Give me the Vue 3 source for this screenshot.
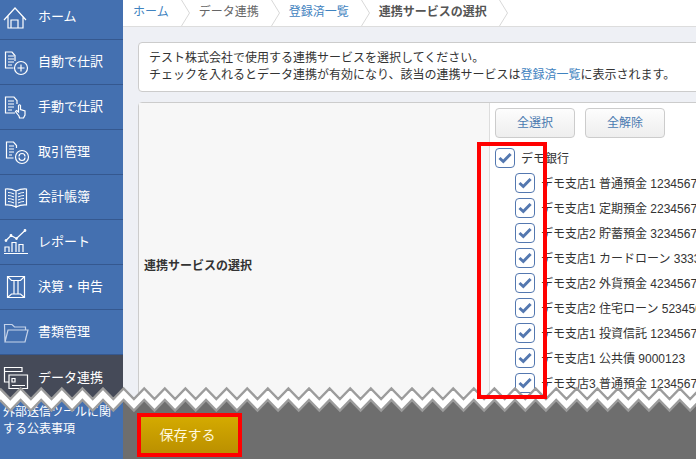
<script setup>
const circle = (x, y, r) => `M${x - r} ${y}a${r} ${r} 0 1 0 ${2 * r} 0a${r} ${r} 0 1 0 ${-2 * r} 0`
const docLines = 'M5 10H11M5 13H11M5 16H11M5 19H9'

const navItems = [
  { label: 'ホーム', d: 'M1 19L12 7L23 19M5 15V27H20V15M8 27V19H15V27' },
  { label: '自動で仕訳', d: `M12 15V9.5L9 6H2.5V22H10.5${docLines}${circle(18, 22, 6.5)}M18 18.5V25.5M14.5 22H21.5` },
  { label: '手動で仕訳', d: `M14 13V9.5L11 6H2.5V22H12${docLines}M16 25L12.5 20.5L13.5 19.5L15.5 21V14.5Q16.5 13 17.5 14.5V18.5L22 20V24L20.5 27H16.5L16 25` },
  { label: '取引管理', d: `M13.5 12V9.5L10.5 6H3.5V22H10.5M6 10H11M6 13H11M6 16H11M6 19H9${circle(19, 21, 6.5)}M16 20.5A3 3 0 0 1 22 20.5M22 21.5A3 3 0 0 1 16 21.5` },
  { label: '会計帳簿', d: 'M13 10V27M13 10Q8 7.5 2.5 8V24Q8 23.5 13 26Q18 23.5 23.5 24V8Q18 7.5 13 10M5 11.5Q8 11.5 11 13M5 14.5Q8 14.5 11 16M5 17.5Q8 17.5 11 19M5 20.5Q8 20.5 11 22M15 13Q18 11.5 21 11.5M15 16Q18 14.5 21 14.5M15 19Q18 17.5 21 17.5M15 22Q18 20.5 21 20.5' },
  { label: 'レポート', d: `M1 27.5H25M2 26V21H6V26M9 26V16.5H13V26M16 26V18.5H20V26M3 14.5L8 9.5L13.5 12.5L22 4.5${circle(3, 14.5, 0.8)}${circle(8, 9.5, 0.8)}${circle(13.5, 12.5, 0.8)}${circle(22, 4.5, 0.8)}` },
  { label: '決算・申告', d: 'M4.5 5.5H21.5V26.5H4.5ZM4.5 5.5L8.5 9.5H17.5L21.5 5.5M4.5 26.5L8.5 23H17.5L21.5 26.5M11 9.5V23M15 9.5V23' },
  { label: '書類管理', d: 'M2 26L1.5 8.5H9L11.5 11H22.5V14M2 26L5 14H25L22 26Z', dim: true },
  { label: 'データ連携', d: 'M19 10V5.5H1.5V20H6M1.5 9.5H19M6 26.5V13H24.5V26.5ZM9 16.5V20H12V16.5ZM9 23.5H22', active: true }
]

const accounts = [
  'デモ支店1 普通預金 1234567',
  'デモ支店1 定期預金 2234567',
  'デモ支店2 貯蓄預金 3234567',
  'デモ支店1 カードローン 3333333',
  'デモ支店2 外貨預金 4234567',
  'デモ支店2 住宅ローン 5234567',
  'デモ支店1 投資信託 1234567',
  'デモ支店1 公共債 9000123',
  'デモ支店3 普通預金 1234567'
]

const crumbs = [
  { label: 'ホーム', kind: 'link' },
  { label: 'データ連携', kind: 'plain' },
  { label: '登録済一覧', kind: 'link' },
  { label: '連携サービスの選択', kind: 'current' }
]

const period = 20.6
const edge = (base, reverse) => {
  const pts = []
  for (let i = 0; i < 70; i++) {
    pts.push([+(i * period / 2).toFixed(1), base + (i % 2 ? 10.5 : 0)])
  }
  return (reverse ? pts.reverse() : pts).map(p => p.join(',')).join(' ')
}
const topEdge = edge(3.5, false)
const bottomEdge = edge(15, false)
const band = edge(3.5, false) + ' ' + edge(15, true)
</script>

<template>
  <div class="page">
    <aside class="side">
      <a v-for="n in navItems" :key="n.label" class="nav" :class="{ active: n.active }">
        <svg class="nav-icon" :class="{ dim: n.dim }" width="32" height="32" viewBox="0 0 32 32">
          <path :d="n.d" />
        </svg>
        <span class="nav-label">{{ n.label }}</span>
      </a>
    </aside>

    <main class="main">
      <nav class="crumbs">
        <span v-for="c in crumbs" :key="c.label" class="crumb" :class="c.kind">
          <span class="crumb-label">{{ c.label }}</span>
          <svg width="9" height="26" viewBox="0 0 9 26"><path d="M0.5 0L8.5 13L0.5 26" /></svg>
        </span>
      </nav>

      <div class="content">
        <div class="notice">
          テスト株式会社で使用する連携サービスを選択してください。<br />
          チェックを入れるとデータ連携が有効になり、該当の連携サービスは<a class="inline-link">登録済一覧</a>に表示されます。
        </div>

        <section class="table">
          <div class="head-cell">連携サービスの選択</div>
          <div class="body-cell">
            <div class="buttons">
              <button class="btn">全選択</button>
              <button class="btn">全解除</button>
            </div>
            <ul class="list">
              <li class="row parent">
                <span class="box"><svg width="18" height="18" viewBox="0 0 18 18"><path d="M3.5 9L7.3 12.5L14.6 5" /></svg></span>
                <span>デモ銀行</span>
              </li>
              <li v-for="a in accounts" :key="a" class="row child">
                <span class="box"><svg width="18" height="18" viewBox="0 0 18 18"><path d="M3.5 9L7.3 12.5L14.6 5" /></svg></span>
                <span>{{ a }}</span>
              </li>
            </ul>
          </div>
        </section>
      </div>
    </main>

    <footer class="footer">
      <a class="ext-link">外部送信ツールに関する公表事項</a>
      <div class="actions">
        <button class="save">保存する</button>
      </div>
    </footer>

    <svg class="tear" width="696" height="30" viewBox="0 0 696 30">
      <polygon :points="band" fill="#fff" />
      <polyline :points="topEdge" fill="none" stroke="#9c9c9c" stroke-width="2.4" />
      <polyline :points="bottomEdge" fill="none" stroke="#9c9c9c" stroke-width="2.4" />
    </svg>

    <div class="mark"></div>
  </div>
</template>

<style>
html, body { margin: 0; background: #fff; }
</style>

<style scoped>
.page {
  position: relative;
  display: flex;
  width: 696px;
  height: 459px;
  overflow: hidden;
  font-family: "Liberation Sans", "Noto Sans CJK JP", sans-serif;
  font-size: 12px;
  color: #333;
  background: #eef0f5;
}
.side {
  flex: 0 0 123px;
  margin-top: -5px;
  background: #4470b0;
}
.nav {
  display: flex;
  align-items: center;
  gap: 3px;
  box-sizing: border-box;
  height: 45px;
  padding-left: 3px;
  border-bottom: 1px solid #35588f;
  font-size: 13px;
  color: #fff;
}
.nav-label { margin-bottom: 3px; }
.nav.active {
  background: #454a58;
  border-bottom: 0;
}
.nav-icon { flex: none; }
.nav-icon path {
  fill: none;
  stroke: #fff;
  stroke-width: 1.2;
}
.nav-icon.dim path { stroke: #c5d3ea; }
.main {
  flex: 1;
  min-width: 0;
}
.crumbs {
  display: flex;
  height: 26px;
  padding-left: 10px;
  background: #fff;
  border-bottom: 1px solid #ddd;
}
.crumb {
  display: flex;
  align-items: center;
  gap: 12px;
  margin-right: 9px;
  white-space: nowrap;
}
.crumb-label { margin-bottom: 5px; }
.crumb svg path {
  fill: none;
  stroke: #d8d8d8;
}
.crumb.link { color: #3f83c0; }
.crumb.plain { color: #666; }
.crumb.current { color: #555; font-weight: 700; }
.content {
  padding: 15px 0 0 15px;
  width: 640px;
}
.notice {
  box-sizing: border-box;
  width: 620px;
  height: 50px;
  padding: 7px 10px;
  line-height: 17px;
  white-space: nowrap;
  background: #fff;
  border: 1px solid #ccc;
  border-radius: 4px;
}
.inline-link { color: #3f83c0; }
.table {
  display: flex;
  box-sizing: border-box;
  width: 640px;
  height: 326px;
  margin-top: 10px;
  background: #fff;
  border: 1px solid #ccc;
  border-radius: 4px;
}
.head-cell {
  flex: 0 0 345px;
  display: flex;
  align-items: center;
  padding: 0 0 2px 5px;
  font-weight: 700;
  background: #f7f7f7;
  border-right: 1px solid #ddd;
}
.body-cell {
  flex: 1;
  padding: 5px 0 0 5px;
  min-width: 0;
}
.buttons {
  display: flex;
  gap: 10px;
}
.btn {
  width: 80px;
  height: 30px;
  padding: 0 0 3px;
  font: inherit;
  color: #4a7ab0;
  background: linear-gradient(#fdfdfd, #eeeeee);
  border: 1px solid #ccc;
  border-radius: 4px;
}
.list {
  margin: 7px 0 0;
  padding: 0;
  list-style: none;
}
.row {
  display: flex;
  align-items: center;
  gap: 6px;
  height: 25px;
  white-space: nowrap;
}
.child { padding-left: 20px; }
.box {
  display: flex;
  align-items: center;
  justify-content: center;
  flex: none;
  box-sizing: border-box;
  width: 20px;
  height: 20px;
  background: #fff;
  border: 1.5px solid #5478b0;
  border-radius: 4px;
}
.box svg path {
  fill: none;
  stroke: #5478b0;
  stroke-width: 3;
}
.footer {
  position: absolute;
  left: 0;
  right: 0;
  top: 397px;
  bottom: 0;
  display: flex;
}
.ext-link {
  box-sizing: border-box;
  flex: 0 0 123px;
  padding: 7px 12px 0 3px;
  font-size: 12px;
  line-height: 17px;
  color: #fff;
  background: #4470b0;
}
.actions {
  flex: 1;
  padding: 16px 0 0 14px;
  background: #6e6e6e;
}
.save {
  box-sizing: border-box;
  width: 105px;
  height: 44px;
  padding: 0 4px 3px 0;
  font: inherit;
  font-size: 14px;
  color: #fff8dc;
  background: linear-gradient(#d4aa00, #bb9000);
  border: 4px solid #f00;
}
.tear {
  position: absolute;
  left: 0;
  top: 385px;
}
.mark {
  position: absolute;
  left: 477px;
  top: 142px;
  width: 70px;
  height: 257px;
  box-sizing: border-box;
  border: 4px solid #f00;
}
</style>
